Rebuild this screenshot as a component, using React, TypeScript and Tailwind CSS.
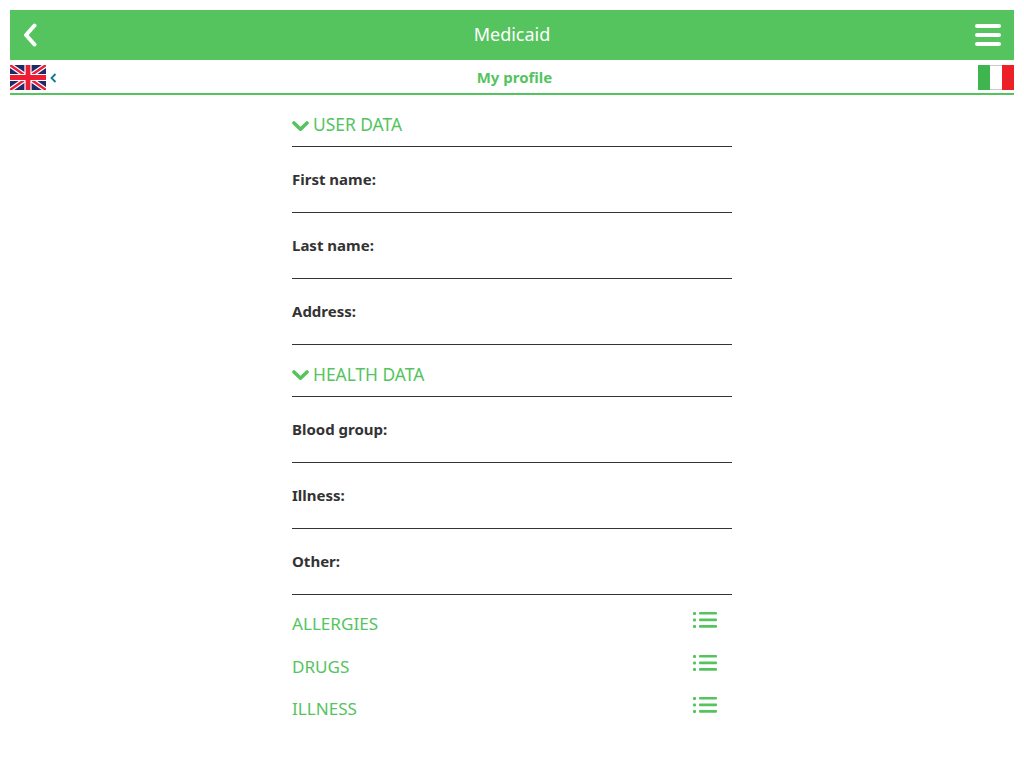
import React from 'react';

const UkFlag = () => (
  <svg width="36" height="25" viewBox="0 0 60 42" preserveAspectRatio="none" className="block">
    <rect width="60" height="42" fill="#1f2a6b" />
    <path d="M0 0 L60 42 M60 0 L0 42" stroke="#fff" strokeWidth="8" />
    <path d="M0 0 L60 42 M60 0 L0 42" stroke="#ee1c35" strokeWidth="4" />
    <path d="M30 0 V42 M0 21 H60" stroke="#fff" strokeWidth="12" />
    <path d="M30 0 V42 M0 21 H60" stroke="#ee1c35" strokeWidth="8" />
  </svg>
);

const ItFlag = () => (
  <div className="flex w-[36px] h-[25px]">
    <div className="flex-1 bg-[#3fb54f]" />
    <div className="flex-1 bg-white border-y border-[#ccc]" />
    <div className="flex-1 bg-[#ee2027]" />
  </div>
);

const ListIcon = () => (
  <svg width="24" height="18" viewBox="0 0 24 18" className="block">
    <g fill="#55c45f">
      <rect x="0" y="1" width="3" height="3" rx="1" />
      <rect x="0" y="7.5" width="3" height="3" rx="1" />
      <rect x="0" y="14" width="3" height="3" rx="1" />
      <rect x="6" y="1" width="18" height="2.6" rx="1" />
      <rect x="6" y="7.6" width="18" height="2.6" rx="1" />
      <rect x="6" y="14.1" width="18" height="2.6" rx="1" />
    </g>
  </svg>
);

const Chevron = () => (
  <svg width="17" height="12" viewBox="0 0 17 12" className="block mt-[2px]">
    <path d="M2 3 L8.5 9.2 L15 3" fill="none" stroke="#55c45f" strokeWidth="3.6" strokeLinecap="round" strokeLinejoin="round" />
  </svg>
);

const SectionHead = ({ title, pad }: { title: string; pad: string }) => (
  <div className={`flex items-center gap-[4px] h-[52px] border-b border-[#333] text-[17.4px] text-[#55c45f] ${pad}`}>
    <Chevron />
    <span>{title}</span>
  </div>
);

const Field = ({ label }: { label: string }) => (
  <div className="h-[66px] pt-[22px] border-b border-[#333] text-[15px] leading-[20px] font-bold text-[#333]">
    {label}
  </div>
);

const ListRow = ({ label }: { label: string }) => (
  <div className="flex items-start justify-between h-[42.5px] pr-[15px] text-[17.1px] text-[#55c45f]">
    <span className="leading-[24px] pt-[1px]">{label}</span>
    <ListIcon />
  </div>
);

export default function App() {
  return (
    <div className="w-[1024px] h-[768px] bg-white p-[10px] font-['Noto_Sans',sans-serif] overflow-hidden">
      {/* Header */}
      <div className="flex items-center justify-between h-[50px] px-[13px] bg-[#55c45f] text-white">
        <svg width="14" height="24" viewBox="0 0 14 24" className="block">
          <path d="M11.5 2.5 L3 12 L11.5 21.5" fill="none" stroke="#fff" strokeWidth="4" strokeLinecap="round" strokeLinejoin="round" />
        </svg>
        <span className="text-[18px] ml-[12px] mb-[1px]">Medicaid</span>
        <div className="flex flex-col gap-[5px] w-[26px]">
          <div className="h-[4px] rounded-full bg-white" />
          <div className="h-[4px] rounded-full bg-white" />
          <div className="h-[4px] rounded-full bg-white" />
        </div>
      </div>

      {/* Sub header */}
      <div className="flex items-center justify-between h-[35px] pt-[5px] pb-[3px] border-b-2 border-[#55c45f]">
        <div className="flex items-center gap-[4px]">
          <UkFlag />
          <svg width="7" height="10" viewBox="0 0 7 10" className="block">
            <path d="M5.5 1 L1.5 5 L5.5 9" fill="none" stroke="#0f7a94" strokeWidth="1.8" />
          </svg>
        </div>
        <span className="text-[15px] font-bold text-[#55c45f] mr-[6px]">My profile</span>
        <ItFlag />
      </div>

      {/* Content */}
      <div className="w-[440px] ml-[282px]">
        <SectionHead title="USER DATA" pad="pt-[8px]" />
        <Field label="First name:" />
        <Field label="Last name:" />
        <Field label="Address:" />
        <SectionHead title="HEALTH DATA" pad="pt-[7px]" />
        <Field label="Blood group:" />
        <Field label="Illness:" />
        <Field label="Other:" />
        <div className="pt-[16px]">
          <ListRow label="ALLERGIES" />
          <ListRow label="DRUGS" />
          <ListRow label="ILLNESS" />
        </div>
      </div>
    </div>
  );
}
